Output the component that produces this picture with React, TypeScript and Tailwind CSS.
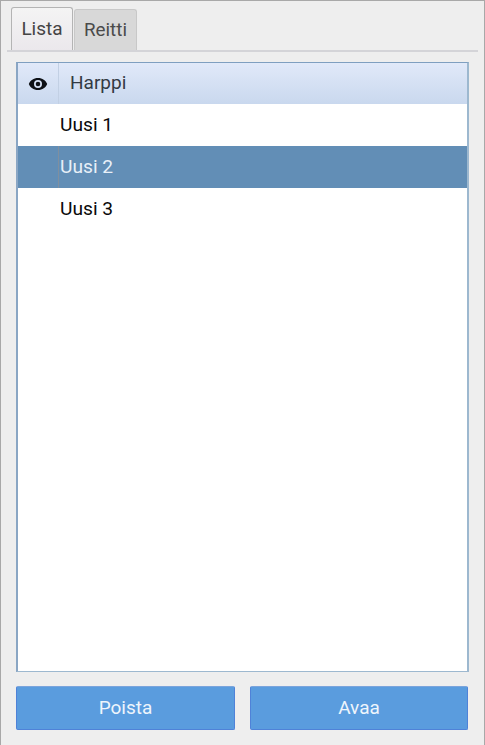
import React from "react";

function Eye() {
  return (
    <svg width="20" height="14" viewBox="0 0 20 14" aria-hidden="true">
      <path
        fillRule="evenodd"
        fill="#0e1116"
        d="M10 1C5.600 1 2.200 3.500 .8 7c1.400 3.500 4.800 6 9.200 6s7.800-2.500 9.200-6C17.800 3.500 14.400 1 10 1Zm0 10a4 4 0 1 1 0-8 4 4 0 0 1 0 8Zm0-6.300a2.300 2.300 0 1 0 0 4.600 2.300 2.300 0 0 0 0-4.600Z"
      />
    </svg>
  );
}

function Row({ label, selected }: { label: string; selected?: boolean }) {
  return (
    <div
      className={
        selected
          ? "flex h-[42px] items-center bg-[#628eb6] text-[#e8f0f8]"
          : "flex h-[42px] items-center bg-white text-[#0a0a0a]"
      }
    >
      <div
        className={
          selected
            ? "h-full w-[41px] shrink-0 border-r border-[#7f8f9f]"
            : "h-full w-[41px] shrink-0"
        }
      />
      <span className="pl-[1px] pt-[1px] text-[19.2px]">{label}</span>
    </div>
  );
}

export default function App() {
  return (
    <div
      className="flex h-[745px] w-[485px] flex-col border-x border-t border-[#a8a8a8] bg-[#eeeeee]"
      style={{ fontFamily: "Roboto, sans-serif" }}
    >
      <div className="mx-[6px] mt-[6px] flex h-[45px] items-end gap-[1px] border-b-2 border-[#d4d4d8] pl-[4px]">
        <div className="flex h-[43px] w-[62px] items-center justify-center rounded-t-[3px] border border-b-0 border-[#b4b4b4] bg-gradient-to-b from-[#f4f4f4] to-[#ebe8ec] text-[19px] text-[#444444]">
          Lista
        </div>
        <div className="flex h-[41px] w-[63px] items-center justify-center rounded-t-[3px] border border-b-0 border-[#c8c8c8] bg-[#d8d8d8] text-[18.8px] text-[#4a4a4a]">
          Reitti
        </div>
      </div>

      <div className="mx-[15px] mt-[10px] flex min-h-0 flex-1 flex-col border-y border-x-2 border-[#9db8cf] border-t-[#7f9fc0] border-l-[#8aa6c4] bg-white">
        <div className="flex h-[41px] shrink-0 items-center bg-gradient-to-b from-[#e1e9f9] to-[#c9d8ee] text-[19px] text-[#333a44]">
          <div className="flex h-full w-[41px] shrink-0 items-center justify-center border-r border-[#c2d0e4]">
            <Eye />
          </div>
          <span className="pl-[11px]">Harppi</span>
        </div>
        <Row label="Uusi 1" />
        <Row label="Uusi 2" selected />
        <Row label="Uusi 3" />
      </div>

      <div className="mx-[15px] mt-[14px] mb-[15px] flex gap-[15px]">
        <button className="h-[44px] w-[219px] rounded-[2px] border border-[#4f82d8] border-t-[#7ba4dc] bg-[#5a9cde] text-[19px] text-[#eef5fc]">
          Poista
        </button>
        <button className="h-[44px] w-[218px] rounded-[2px] border border-[#4f82d8] border-t-[#7ba4dc] bg-[#5a9cde] text-[19px] text-[#eef5fc]">
          Avaa
        </button>
      </div>
    </div>
  );
}
